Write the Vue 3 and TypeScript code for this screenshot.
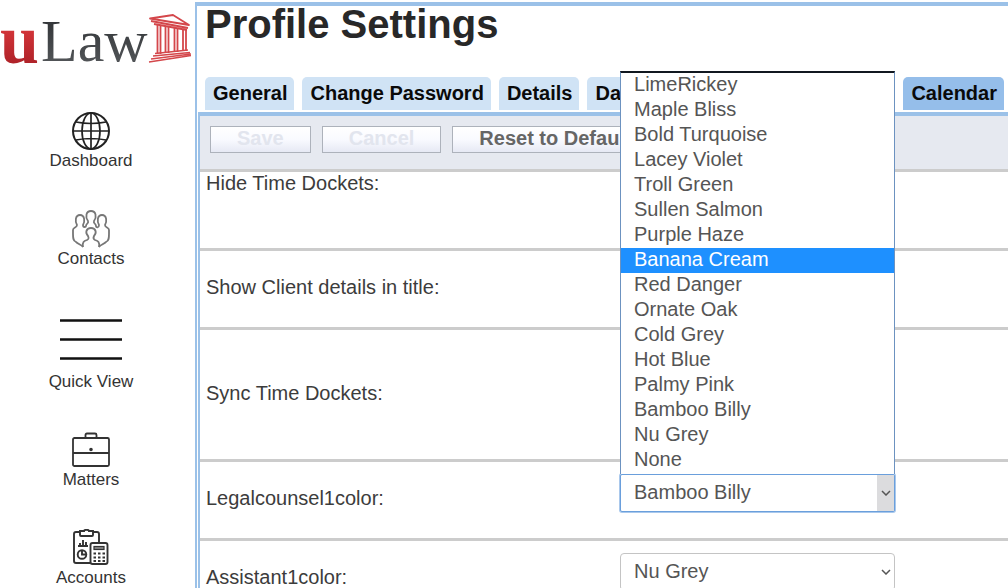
<script setup lang="ts">
import { ref } from 'vue'

const nav = [
  { id: 'dashboard', label: 'Dashboard' },
  { id: 'contacts', label: 'Contacts' },
  { id: 'quick', label: 'Quick View' },
  { id: 'matters', label: 'Matters' },
  { id: 'accounts', label: 'Accounts' },
]
const tabs = ['General', 'Change Password', 'Details', 'Da', 'Calendar']
const activeTab = ref('Calendar')
const colors = [
  'LimeRickey', 'Maple Bliss', 'Bold Turquoise', 'Lacey Violet', 'Troll Green',
  'Sullen Salmon', 'Purple Haze', 'Banana Cream', 'Red Danger', 'Ornate Oak',
  'Cold Grey', 'Hot Blue', 'Palmy Pink', 'Bamboo Billy', 'Nu Grey', 'None',
]
const highlighted = ref('Banana Cream')
const open = ref(true)
const counsel = ref('Bamboo Billy')
const assistant = ref('Nu Grey')

function pick(color: string) {
  counsel.value = color
  open.value = false
}
</script>

<template>
  <div class="shell">
    <aside class="sidebar">
      <svg class="logo" viewBox="0 0 195 80" role="img" aria-label="uLaw">
        <defs>
          <linearGradient id="red" x1="0" y1="0" x2="0" y2="1">
            <stop offset="0.3" stop-color="#d8373b" />
            <stop offset="1" stop-color="#a01c22" />
          </linearGradient>
          <linearGradient id="grey" x1="0" y1="0" x2="0" y2="1">
            <stop offset="0.2" stop-color="#333639" />
            <stop offset="1" stop-color="#5a5d60" />
          </linearGradient>
        </defs>
        <text class="logo-u" x="0" y="63" fill="url(#red)">u</text>
        <text class="logo-law" x="41" y="61" fill="url(#grey)">Law</text>
        <g fill="none" stroke="#d4474b" stroke-width="1.8" stroke-linejoin="round">
          <path d="M150 18.500 L173 15 L189 25 Z" />
          <path d="M151 21 L188 28 M154 24 L187 30" />
          <path d="M157.500 25V54 M160.500 25V54 M165.500 26V53 M168.500 26V53 M174.500 27V52 M177.500 28V52 M183 29V51 M186 29V51" />
          <path d="M155 53.500 L188 50 M153 56 L190 52.500 M151 59 L191 54 M149 62 L191 55.500" stroke-width="1.400" />
        </g>
      </svg>
      <nav class="nav">
        <a v-for="item in nav" :key="item.id" href="#" class="nav-item">
          <svg v-if="item.id === 'dashboard'" class="icon" viewBox="0 0 38 38" fill="none" stroke="#222" stroke-width="1.700">
            <circle cx="19" cy="19" r="18" stroke-width="2" />
            <ellipse cx="19" cy="19" rx="9" ry="18" />
            <path d="M19 1V37M1 19H37M4 10Q19 13 34 10M4 28Q19 25 34 28" />
          </svg>
          <svg v-else-if="item.id === 'contacts'" class="icon" viewBox="0 0 38 38" fill="none" stroke="#777" stroke-width="1.800" stroke-linejoin="round">
            <path d="M11 37C10 35 6 34 4 32C1 31 1 28 1 24V20C1 17 5 18 5 15C3 12 3 5 8 5C13 5 13 12 11 15C11 18 14 17 14 16C14 13 17 14 16 11C13 7 14 1 19 1C24 1 25 7 22 11C21 14 24 13 24 16C24 18 27 18 27 15C25 12 25 5 30 5C35 5 35 12 33 15C33 18 37 17 37 20V24C37 28 37 31 34 32C32 34 28 35 27 37" />
            <path d="M11 37C10 32 12 31 15 30C17 29 17 28 16 26C13 23 14 18 19 18C24 18 25 23 22 26C21 28 21 29 23 30C26 31 28 32 27 37" />
          </svg>
          <svg v-else-if="item.id === 'quick'" class="icon icon-lines" viewBox="0 0 62 63" stroke="#111" stroke-width="2.500">
            <path d="M0 12.500H62M0 31.500H62M0 50.500H62" />
          </svg>
          <svg v-else-if="item.id === 'matters'" class="icon" viewBox="0 0 38 38" fill="none" stroke="#333" stroke-width="1.800">
            <rect x="1" y="7" width="36" height="28" rx="1.500" />
            <path d="M1 22H37M13.500 7V4Q13.500 2.500 15 2.500H23Q24.500 2.500 24.500 4V7" />
            <circle cx="19" cy="18.500" r="0.900" fill="#222" />
          </svg>
          <svg v-else class="icon" viewBox="0 0 38 38" fill="none" stroke="#333" stroke-width="1.900">
            <path d="M18 34H4Q2 34 2 32V5Q2 3 4 3H8M21 3H25Q27 3 27 5V13" />
            <path d="M8 2V6Q8 7 9 7H20Q21 7 21 6V2H17Q17 0.800 14.500 0.800T12 2Z" />
            <path d="M6 17H16M8 17V14M11 17V11M14 17V13" />
            <circle cx="10" cy="25.500" r="4.300" />
            <path d="M10 21V25.500H14" />
            <rect x="18.500" y="14" width="17" height="21" rx="2" />
            <rect x="22" y="17.500" width="10" height="3" fill="#888" stroke-width="1.200" />
            <path d="M21.500 24.500H33M21.500 28.500H33M21.500 32H33" stroke-width="2.200" stroke-dasharray="2.500 2" />
          </svg>
          <span>{{ item.label }}</span>
        </a>
      </nav>
    </aside>

    <main class="main">
      <h1>Profile Settings</h1>
      <div class="tabs" role="tablist">
        <button
          v-for="tab in tabs"
          :key="tab"
          type="button"
          role="tab"
          class="tab"
          :class="{ active: tab === activeTab, wide: tab === 'Da' }"
          :aria-selected="tab === activeTab"
          @click="activeTab = tab"
        >{{ tab }}</button>
      </div>
      <form class="panel" @submit.prevent>
        <div class="toolbar">
          <button type="submit" class="action" disabled>Save</button>
          <button type="button" class="action" disabled>Cancel</button>
          <button type="button" class="action">Reset to Defaults</button>
        </div>
        <div class="row first"><span>Hide Time Dockets:</span></div>
        <div class="row"><span>Show Client details in title:</span></div>
        <div class="row tall"><span>Sync Time Dockets:</span></div>
        <div class="row">
          <label for="counsel">Legalcounsel1color:</label>
          <div class="field">
            <select id="counsel" v-model="counsel" class="opened">
              <option v-for="c in colors" :key="c">{{ c }}</option>
            </select>
            <span class="arrow shaded"><svg viewBox="0 0 10 6"><path d="M1 1L5 5L9 1" /></svg></span>
            <ul v-if="open" class="menu" role="listbox" aria-label="Legalcounsel1color">
              <li
                v-for="c in colors"
                :key="c"
                role="option"
                :aria-selected="c === highlighted"
                :class="{ hot: c === highlighted }"
                @mouseenter="highlighted = c"
                @click="pick(c)"
              >{{ c }}</li>
            </ul>
          </div>
        </div>
        <div class="row">
          <label for="assistant">Assistant1color:</label>
          <div class="field">
            <select id="assistant" v-model="assistant">
              <option v-for="c in colors" :key="c">{{ c }}</option>
            </select>
            <span class="arrow"><svg viewBox="0 0 10 6"><path d="M1 1L5 5L9 1" /></svg></span>
          </div>
        </div>
      </form>
    </main>
  </div>
</template>

<style>
body {
  background: #fff;
}
</style>

<style scoped>
.shell,
.shell * {
  box-sizing: border-box;
}
.shell {
  display: flex;
  height: 100vh;
  overflow: hidden;
  font-family: "Liberation Sans", Arial, sans-serif;
  font-size: 20px;
  color: #3c3c3c;
}
.sidebar {
  flex: 0 0 195px;
}
.logo {
  display: block;
  width: 195px;
  height: 80px;
}
.logo-u,
.logo-law {
  font-family: "Liberation Serif", "Times New Roman", serif;
}
.logo-u {
  font-size: 70px;
  font-weight: bold;
}
.logo-law {
  font-size: 60px;
}
.nav {
  display: flex;
  flex-direction: column;
  gap: 38px;
  padding: 32px 13px 0 0;
}
.nav-item {
  display: flex;
  flex-direction: column;
  align-items: center;
  color: #333;
  font-size: 17px;
  line-height: 22px;
  text-decoration: none;
}
.icon {
  width: 38px;
  height: 38px;
}
.icon-lines {
  width: 62px;
  height: 63px;
}
.main {
  flex: 1;
  min-width: 0;
  margin-top: 2px;
  padding-left: 1px;
  border-top: 4px solid #9bc1e8;
  border-left: 2px solid #9bc1e8;
}
h1 {
  margin: 0 0 35px;
  padding-left: 7px;
  color: #282828;
  font-size: 40px;
  line-height: 36px;
}
.tabs {
  display: flex;
  gap: 8px;
  padding: 0 4px 2px 7px;
}
.tab {
  height: 33px;
  padding: 0 7px 2px 8px;
  border: 0;
  border-radius: 5px 5px 0 0;
  background: #d0e3f5;
  color: #0a0a0a;
  font: bold 20px/30px "Liberation Sans", Arial, sans-serif;
  text-align: left;
  white-space: nowrap;
}
.tab.wide {
  flex: 1;
}
.tab.active {
  background: #95beea;
}
.panel {
  border-top: 4px solid #9bc1e8;
  border-left: 2px solid #9bc1e8;
}
.toolbar {
  display: flex;
  gap: 11px;
  height: 56px;
  padding: 10px;
  border-bottom: 3px solid #ccc;
  background: #e6e9f0;
}
.action {
  height: 27px;
  padding: 0 26px 2px;
  border: 1px solid #adb2bb;
  background: linear-gradient(#fff, #f9faff 50%, #e6e9f4);
  color: #666;
  font: bold 20px/23px "Liberation Sans", Arial, sans-serif;
  white-space: nowrap;
}
.action:disabled {
  color: #e2e5ee;
}
.row {
  display: grid;
  grid-template-columns: 52% 1fr;
  align-items: center;
  min-height: 79px;
  padding: 0 0 4px 6px;
  border-bottom: 3px solid #ccc;
  line-height: 22px;
}
.row.first {
  align-items: start;
}
.row.tall {
  min-height: 132px;
}
.field {
  position: relative;
  width: 275px;
  height: 38px;
  margin: 0 0 10px -3px;
}
select {
  width: 100%;
  height: 38px;
  padding: 0 30px 2px 13px;
  border: 1px solid #c4c4c4;
  border-radius: 4px;
  outline: 0;
  appearance: none;
  background: #fff;
  color: #555;
  font: 20px/24px "Liberation Sans", Arial, sans-serif;
}
select.opened {
  border: 1px solid #6a9fdc;
  border-radius: 2px;
  box-shadow: 0 0 0 1px #a9c8ec;
}
.arrow {
  position: absolute;
  top: 1px;
  right: 1px;
  bottom: 1px;
  display: flex;
  align-items: center;
  justify-content: center;
  width: 17px;
  pointer-events: none;
}
.arrow.shaded {
  background: #dcdcde;
}
.arrow svg {
  width: 10px;
  height: 6px;
  fill: none;
  stroke: #555;
  stroke-width: 1.5px;
}
.menu {
  position: absolute;
  bottom: 100%;
  left: 0;
  z-index: 2;
  width: 100%;
  margin: 0;
  padding: 0 0 1px;
  border: 1px solid #6c92c0;
  border-top: 2px solid #111820;
  border-bottom: 0;
  background: #fff;
  color: #555;
  list-style: none;
}
.menu li {
  padding: 0 0 2px 13px;
  line-height: 23px;
}
.menu li.hot {
  background: #1e90ff;
  color: #fff;
}
</style>
